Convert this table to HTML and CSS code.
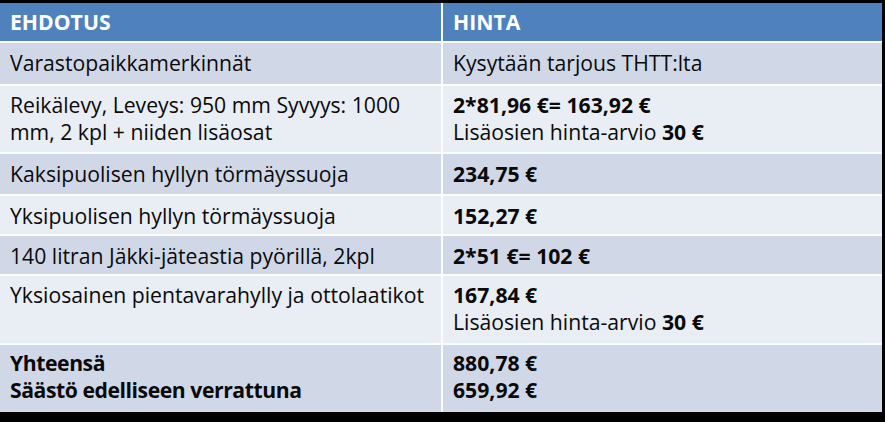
FILE: index.html
```html
<!DOCTYPE html>
<html>
<head>
<meta charset="utf-8">
<link rel="stylesheet" href="styles.css">
</head>
<body>
<div class="table">
  <div class="cell head">EHDOTUS</div>
  <div class="cell head">HINTA</div>

  <div class="cell dark r1">Varastopaikkamerkinnät</div>
  <div class="cell dark r1">Kysytään tarjous THTT:lta</div>

  <div class="cell light r2">Reikälevy, Leveys: 950 mm Syvyys: 1000 mm, 2 kpl + niiden lisäosat</div>
  <div class="cell light r2"><b>2*81,96 €= 163,92 €</b><br>Lisäosien hinta-arvio <b>30 €</b></div>

  <div class="cell dark r3">Kaksipuolisen hyllyn törmäyssuoja</div>
  <div class="cell dark r3"><b>234,75 €</b></div>

  <div class="cell light r4">Yksipuolisen hyllyn törmäyssuoja</div>
  <div class="cell light r4"><b>152,27 €</b></div>

  <div class="cell dark r5">140 litran Jäkki-jäteastia pyörillä, 2kpl</div>
  <div class="cell dark r5"><b>2*51 €= 102 €</b></div>

  <div class="cell light r6">Yksiosainen pientavarahylly ja ottolaatikot</div>
  <div class="cell light r6"><b>167,84 €</b><br>Lisäosien hinta-arvio <b>30 €</b></div>

  <div class="cell dark r7 total"><b>Yhteensä<br>Säästö edelliseen verrattuna</b></div>
  <div class="cell dark r7"><b>880,78 €<br>659,92 €</b></div>
</div>
</body>
</html>
```
FILE: styles.css
```css
html, body {
  margin: 0;
  padding: 0;
  background: #000;
  width: 885px;
  height: 422px;
  overflow: hidden;
}
.table {
  margin-top: 3px;
  width: 882px;
  display: grid;
  grid-template-columns: 441px 1fr;
  grid-template-rows: 38px 41px 66px 40px 38px 38px 67px 67px;
  gap: 2px;
  background: #fbfcfd;
  font-family: "Open Sans", "Liberation Sans", sans-serif;
  font-size: 21.2px;
  line-height: 27px;
  color: #0a0a0a;
}
.cell {
  padding: 5px 10px 0 10px;
}
.head {
  background: #4f81bd;
  color: #fff;
  font-weight: bold;
  padding-top: 5px;
}
.dark { background: #d0d8e8; }
.light { background: #e9edf4; }
.r1, .r3, .r4, .r5 { padding-top: 6px; }
.r7 { padding-top: 4px; }
.total { letter-spacing: -0.45px; }
b { font-weight: bold; }
```
